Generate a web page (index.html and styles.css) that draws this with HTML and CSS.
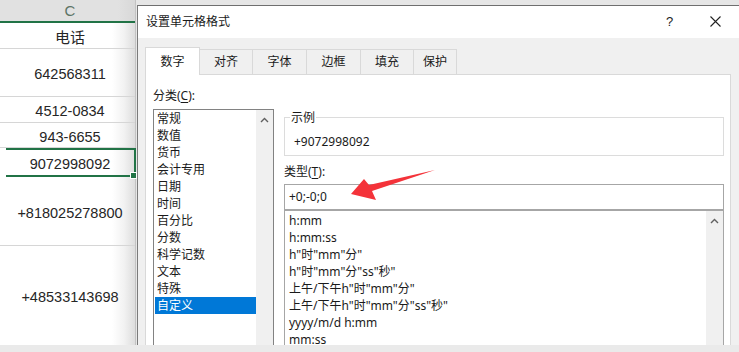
FILE: index.html
```html
<!DOCTYPE html>
<html lang="zh-CN">
<head>
    <meta charset="UTF-8">
    <title>设置单元格格式</title>
    <link rel="stylesheet" href="styles.css">
</head>
<body>
    <div class="screen">
        <div class="workspace">
            <div class="sheet">
                <div class="col-head">C</div>
                <div class="cell r26 title-cell">电话</div>
                <div class="cell r48">642568311</div>
                <div class="cell r26">4512-0834</div>
                <div class="cell r25">943-6655</div>
                <div class="cell selected">9072998092<span class="fill-handle"></span></div>
                <div class="cell r69">+818025278800</div>
                <div class="cell r99">+48533143698</div>
            </div>

            <div class="dialog">
                <div class="titlebar">
                    <span class="title">设置单元格格式</span>
                    <span class="help">?</span>
                    <svg class="close" width="11" height="11" viewBox="0 0 11 11">
                        <path d="M0.5 0.5 L10.5 10.5 M10.5 0.5 L0.5 10.5" stroke="#222" stroke-width="1.1" fill="none"/>
                    </svg>
                </div>

                <div class="dialog-body">
                    <div class="tabs">
                        <div class="tab active">数字</div>
                        <div class="tab">对齐</div>
                        <div class="tab">字体</div>
                        <div class="tab">边框</div>
                        <div class="tab">填充</div>
                        <div class="tab last">保护</div>
                    </div>

                    <div class="panel">
                        <div class="cat-col">
                            <div class="label">分类(<u>C</u>):</div>
                            <div class="listbox cat-list">
                                <ul class="items">
                                    <li>常规</li>
                                    <li>数值</li>
                                    <li>货币</li>
                                    <li>会计专用</li>
                                    <li>日期</li>
                                    <li>时间</li>
                                    <li>百分比</li>
                                    <li>分数</li>
                                    <li>科学记数</li>
                                    <li>文本</li>
                                    <li>特殊</li>
                                    <li class="picked">自定义</li>
                                </ul>
                                <div class="vscroll">
                                    <svg width="9" height="6" viewBox="0 0 9 6"><path d="M1 5 L4.5 1.5 L8 5" stroke="#606060" stroke-width="1.4" fill="none"/></svg>
                                </div>
                            </div>
                        </div>

                        <div class="type-col">
                            <fieldset class="sample">
                                <legend>示例</legend>
                                <div class="sample-value">+9072998092</div>
                            </fieldset>
                            <div class="label type-label">类型(<u>T</u>):</div>
                            <div class="type-input">+0;-0;0</div>
                            <div class="listbox fmt-list">
                                <ul class="items">
                                    <li>h:mm</li>
                                    <li>h:mm:ss</li>
                                    <li>h"时"mm"分"</li>
                                    <li>h"时"mm"分"ss"秒"</li>
                                    <li>上午/下午h"时"mm"分"</li>
                                    <li>上午/下午h"时"mm"分"ss"秒"</li>
                                    <li>yyyy/m/d h:mm</li>
                                    <li>mm:ss</li>
                                </ul>
                                <div class="vscroll">
                                    <svg width="9" height="6" viewBox="0 0 9 6"><path d="M1 5 L4.5 1.5 L8 5" stroke="#606060" stroke-width="1.4" fill="none"/></svg>
                                </div>
                            </div>
                        </div>
                    </div>
                </div>
            </div>
        </div>
        <div class="statusbar"></div>

        <!-- red annotation arrow over the dialog -->
        <svg class="annotation" width="739" height="352" viewBox="0 0 739 352">
            <polygon points="351,194 364,179 369,185 435,170 372,191 376,200" fill="#f4333a"/>
        </svg>
    </div>
</body>
</html>
```

FILE: styles.css
```css
body {
    margin: 0;
    background: #e6e6e6;
    font-family: "Noto Sans", "Noto Sans CJK SC", sans-serif;
    font-size: 12px;
    color: #1a1a1a;
}

.screen {
    position: relative;
    width: 739px;
    height: 352px;
    overflow: hidden;
    background: #e6e6e6;
}

.workspace {
    display: flex;
    height: 345px;
    overflow: hidden;
}

.statusbar {
    height: 7px;
    background: #eaeaea;
}

.annotation {
    position: absolute;
    left: 0;
    top: 0;
    pointer-events: none;
}

/* spreadsheet column */
.sheet {
    width: 135px;
    flex: none;
    border-right: 1px solid #c3c3c3;
    margin-right: 1px;
    background: linear-gradient(to right, #ffffff 112px, #f2f2f2 124px, #dddddd 135px);
    font-family: "Liberation Sans", "Noto Sans CJK SC", sans-serif;
    font-size: 14.5px;
    color: #262626;
}

.col-head {
    height: 21px;
    line-height: 21px;
    border-bottom: 2px solid #217346;
    background: linear-gradient(to right, #e1e1e1 118px, #d8d8d8 135px);
    text-align: center;
    color: #5d7466;
    font-size: 15px;
    padding-left: 5px;
}

.cell {
    display: flex;
    align-items: center;
    justify-content: center;
    box-sizing: border-box;
    border-bottom: 1px solid #d6d6d6;
    padding: 3px 0 0 5px;
}

.title-cell {
    font-family: "Noto Sans CJK SC", sans-serif;
    font-size: 15px;
    padding-top: 1px;
}

.r25 { height: 25px; }
.r26 { height: 26px; }
.r48 { height: 48px; }
.r69 { height: 69px; }
.r99 { height: 99px; border-bottom: none; }

.cell.selected {
    position: relative;
    height: 29px;
    margin-left: 6px;
    padding-left: 0;
    border: 2px solid #217346;
    border-left: none;
    margin-right: -1px;
}

.fill-handle {
    position: absolute;
    right: -3px;
    bottom: -4px;
    width: 5px;
    height: 5px;
    background: #217346;
    border: 1px solid #fff;
}

/* dialog */
.dialog {
    flex: 1;
    margin-top: 5px;
    border-top: 1px solid #6f6f6f;
    border-left: 1px solid #7a7a7a;
    background: #f0f0f0;
    display: flex;
    flex-direction: column;
}

.titlebar {
    height: 30px;
    flex: none;
    display: flex;
    align-items: center;
    background: #fff;
    padding: 0 18px 2px 8px;
}

.title {
    flex: 1;
}

.help {
    width: 6px;
    margin-right: 38px;
    font-family: "Liberation Sans", sans-serif;
    font-size: 13px;
    color: #222;
}

.close {
    display: block;
}

.dialog-body {
    flex: 1;
    display: flex;
    flex-direction: column;
    padding: 9px 8px 0 7px;
}

.tabs {
    display: flex;
    align-items: flex-end;
    height: 27px;
    position: relative;
    z-index: 1;
}

.tab {
    box-sizing: border-box;
    width: 55px;
    height: 25px;
    line-height: 24px;
    text-align: center;
    border: 1px solid #d9d9d9;
    border-bottom: none;
    background: #f0f0f0;
    margin-left: -1px;
}

.tab.active {
    height: 28px;
    margin-bottom: -1px;
    margin-left: 0;
    background: #fff;
    line-height: 27px;
    position: relative;
    z-index: 2;
}

.tab:nth-child(2),
.tab:nth-child(5) {
    width: 54px;
}

.tab.last {
    width: 44px;
}

.panel {
    flex: 1;
    display: flex;
    gap: 10px;
    background: #fff;
    border: 1px solid #d9d9d9;
    border-bottom: none;
    padding: 12px 6px 0 7px;
}

.label {
    line-height: 17px;
}

.label u {
    text-decoration-thickness: 1px;
    text-underline-offset: 2px;
}

.cat-col {
    width: 121px;
    flex: none;
    display: flex;
    flex-direction: column;
}

.listbox {
    display: flex;
    background: #fff;
}

.items {
    list-style: none;
    margin: 0;
    padding: 0;
    flex: 1;
}

.items li {
    line-height: 17px;
    white-space: nowrap;
}

.cat-list {
    flex: 1;
    margin-top: 5px;
    border: 1px solid #828282;
    border-bottom: none;
}

.cat-list .items li {
    padding-left: 2px;
    margin-left: 1px;
}

.cat-list .items li.picked {
    background: #0078d7;
    color: #fff;
}

.vscroll {
    width: 17px;
    flex: none;
    background: #f0f0f0;
    display: flex;
    justify-content: center;
    padding-top: 7px;
    box-sizing: border-box;
}

.vscroll svg {
    display: block;
}

.type-col {
    flex: 1;
    display: flex;
    flex-direction: column;
}

.sample {
    margin: 22px 0 0 0;
    padding: 7px 0 5px 5px;
    border: 1px solid #dcdcdc;
    min-width: 0;
}

.sample legend {
    padding: 0 1px;
    line-height: 17px;
}

.sample-value {
    line-height: 17px;
    padding-left: 4px;
}

.type-label {
    margin-top: 7px;
}

.type-input {
    box-sizing: border-box;
    height: 26px;
    margin-top: 4px;
    border: 1px solid #a6a6a6;
    line-height: 23px;
    padding-left: 4px;
}

.fmt-list {
    flex: 1;
    border: 1px solid #a6a6a6;
    border-bottom: none;
}

.fmt-list .items {
    padding: 1px 0 0 4px;
}
```
